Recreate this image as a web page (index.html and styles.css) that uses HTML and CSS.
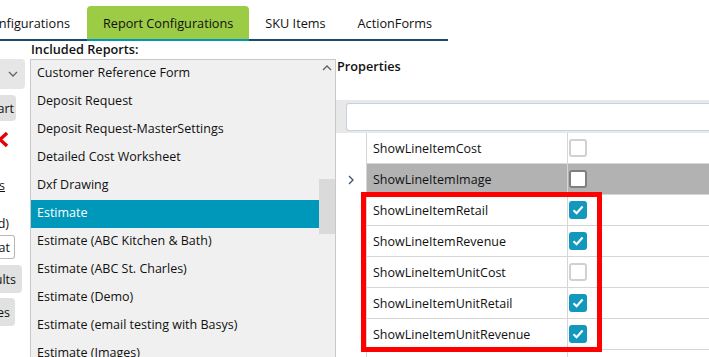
FILE: index.html
```html
<!DOCTYPE html>
<html lang="en">
<head>
    <meta charset="UTF-8">
    <meta name="viewport" content="width=device-width, initial-scale=1.0">
    <title>Report Configurations</title>
    <link rel="stylesheet" href="styles.css">
</head>
<body>
    <nav class="tabs">
        <div class="tab tab-cut"><span>Configurations</span></div>
        <div class="tab active">Report Configurations</div>
        <div class="tab">SKU Items</div>
        <div class="tab">ActionForms</div>
    </nav>

    <div class="workspace">
        <aside class="side">
            <div class="side-item dropdown">
                <svg width="10" height="6" viewBox="0 0 10 6"><path d="M1 1 L5 5 L9 1" fill="none" stroke="#5a6470" stroke-width="1.3"/></svg>
            </div>
            <div class="side-item side-btn btn-start"><span>Start</span></div>
            <div class="side-item remove">
                <svg width="8" height="15" viewBox="0 0 8 15"><path d="M-7 1 L7 14 M-7 14 L7 1" fill="none" stroke="#e8000b" stroke-width="3.4"/></svg>
            </div>
            <div class="side-item side-text link"><span>Options</span></div>
            <div class="side-item side-text required"><span>(Required)</span></div>
            <div class="side-item side-input"><span>Format</span></div>
            <div class="side-item side-btn btn-defaults"><span>Defaults</span></div>
            <div class="side-item side-btn btn-save"><span>Save Changes</span></div>
        </aside>

        <section class="reports">
            <div class="reports-label">Included Reports:</div>
            <div class="listbox">
                <ul class="report-list">
                    <li>Customer Reference Form</li>
                    <li>Deposit Request</li>
                    <li>Deposit Request-MasterSettings</li>
                    <li>Detailed Cost Worksheet</li>
                    <li>Dxf Drawing</li>
                    <li class="selected">Estimate</li>
                    <li>Estimate (ABC Kitchen &amp; Bath)</li>
                    <li>Estimate (ABC St. Charles)</li>
                    <li>Estimate (Demo)</li>
                    <li>Estimate (email testing with Basys)</li>
                    <li>Estimate (Images)</li>
                </ul>
                <div class="scrollbar">
                    <div class="scroll-arrow">
                        <svg width="10" height="6" viewBox="0 0 10 6"><path d="M1 5 L5 1 L9 5" fill="none" stroke="#606060" stroke-width="1.3"/></svg>
                    </div>
                    <div class="scroll-thumb"></div>
                </div>
            </div>
        </section>

        <section class="props">
            <div class="props-title">Properties</div>
            <div class="search-band"><div class="search-box"></div></div>
            <div class="grid">
                <div class="row">
                    <div class="cell-head"></div>
                    <div class="cell-name">ShowLineItemCost</div>
                    <div class="cell-value"><span class="check"></span></div>
                </div>
                <div class="row selected">
                    <div class="cell-head">
                        <svg width="6" height="10" viewBox="0 0 6 10"><path d="M1 1 L5 5 L1 9" fill="none" stroke="#3d5266" stroke-width="1.3"/></svg>
                    </div>
                    <div class="cell-name">ShowLineItemImage</div>
                    <div class="cell-value"><span class="check"></span></div>
                </div>
                <div class="row">
                    <div class="cell-head"></div>
                    <div class="cell-name">ShowLineItemRetail</div>
                    <div class="cell-value"><span class="check on"><svg width="14" height="14" viewBox="0 0 14 14"><path d="M2.5 7.2 L5.6 10.2 L11.6 3.6" fill="none" stroke="#fff" stroke-width="2.2"/></svg></span></div>
                </div>
                <div class="row">
                    <div class="cell-head"></div>
                    <div class="cell-name">ShowLineItemRevenue</div>
                    <div class="cell-value"><span class="check on"><svg width="14" height="14" viewBox="0 0 14 14"><path d="M2.5 7.2 L5.6 10.2 L11.6 3.6" fill="none" stroke="#fff" stroke-width="2.2"/></svg></span></div>
                </div>
                <div class="row">
                    <div class="cell-head"></div>
                    <div class="cell-name">ShowLineItemUnitCost</div>
                    <div class="cell-value"><span class="check"></span></div>
                </div>
                <div class="row">
                    <div class="cell-head"></div>
                    <div class="cell-name">ShowLineItemUnitRetail</div>
                    <div class="cell-value"><span class="check on"><svg width="14" height="14" viewBox="0 0 14 14"><path d="M2.5 7.2 L5.6 10.2 L11.6 3.6" fill="none" stroke="#fff" stroke-width="2.2"/></svg></span></div>
                </div>
                <div class="row">
                    <div class="cell-head"></div>
                    <div class="cell-name">ShowLineItemUnitRevenue</div>
                    <div class="cell-value"><span class="check on"><svg width="14" height="14" viewBox="0 0 14 14"><path d="M2.5 7.2 L5.6 10.2 L11.6 3.6" fill="none" stroke="#fff" stroke-width="2.2"/></svg></span></div>
                </div>
                <div class="row">
                    <div class="cell-head"></div>
                    <div class="cell-name"></div>
                    <div class="cell-value"></div>
                </div>
            </div>
            <div class="highlight"></div>
        </section>
    </div>
</body>
</html>
```

FILE: styles.css
```css
:root {
    --text: #111;
    --border: #c9c9c9;
    --grid-line: #d6d6d6;
    --list-bg: #f0f0f0;
    --teal: #0098ba;
    --check: #1297bd;
    --green: #9ccb45;
    --navy: #1b4a6e;
}
body {
    margin: 0;
    font-family: "Open Sans", "Noto Sans", sans-serif;
    font-size: 12.5px;
    color: var(--text);
    background: #fff;
    overflow: hidden;
    height: 357px;
}

/* tabs */
.tabs { display: flex; width: max-content; padding-top: 6px; border-bottom: 2px solid var(--navy); }
.tab { flex: none; height: 33px; padding: 0 16px; display: flex; align-items: center; white-space: nowrap; font-size: 12.7px; }
.tab-cut { width: 87px; box-sizing: border-box; padding: 0 17px 0 0; justify-content: flex-end; overflow: hidden; }
.tab.active { background: var(--green); border-radius: 4px 4px 0 0; border-bottom: 2px solid var(--teal); margin-bottom: -2px; }

/* layout */
.workspace { display: flex; align-items: flex-start; height: 316px; }

/* clipped left column */
.side { width: 26px; flex: none; margin-right: 4px; padding-top: 18px; display: flex; flex-direction: column; overflow: hidden; }
.side-item { flex: none; display: flex; justify-content: flex-end; align-items: center; white-space: nowrap; overflow: hidden; box-sizing: border-box; }
.dropdown { width: 25px; height: 30px; background: #e6e6e6; border-radius: 0 4px 4px 0; justify-content: center; padding-left: 1px; }
.side-btn { background: #e1e1e1; border-radius: 0 4px 4px 0; }
.btn-start { width: 16px; height: 26px; margin-top: 6px; padding-right: 2px; }
.remove { width: 8px; height: 15px; margin-top: 11px; justify-content: flex-start; }
.side-text { width: 26px; height: 17px; line-height: 17px; }
.link { margin-top: 30px; padding-right: 21px; }
.link span { text-decoration: underline; }
.required { margin-top: 21px; padding-right: 17px; }
.side-input { width: 15px; height: 24px; margin-top: 3px; background: #fff; border: 1px solid #b8b8b8; border-left: none; border-radius: 0 3px 3px 0; padding-right: 4px; }
.btn-defaults { width: 22px; height: 28px; margin-top: 6px; padding-right: 6px; }
.btn-save { width: 15px; height: 28px; margin-top: 5px; padding-right: 5px; }

/* reports list */
.reports { width: 306px; flex: none; }
.reports-label { line-height: 17px; font-size: 12.7px; font-weight: 600; padding-left: 1px; }
.listbox { margin-top: 1px; height: 320px; display: flex; background: var(--list-bg); border: 1px solid var(--border); border-bottom: none; }
.report-list { list-style: none; margin: 0; padding: 0; flex: 1; }
.report-list li { height: 28px; line-height: 25px; padding: 0 0 3px 6px; box-sizing: border-box; white-space: nowrap; }
.report-list li.selected { background: var(--teal); color: #fff; }
.scrollbar { width: 16px; flex: none; display: flex; flex-direction: column; align-items: center; }
.scroll-arrow { height: 16px; display: flex; align-items: center; justify-content: center; }
.scroll-thumb { width: 16px; height: 55px; margin-top: 103px; background: #dadada; }

/* properties */
.props { flex: 1; position: relative; overflow: hidden; padding-top: 17px; height: 299px; }
.props-title { line-height: 17px; font-size: 12.7px; font-weight: 600; padding-left: 1px; }
.search-band { margin-top: 25px; background: #e8e8e8; padding: 3px 0 2px 10px; }
.search-box { height: 28px; box-sizing: border-box; background: #fff; border: 1px solid #c5d3e0; border-right: none; border-radius: 3px 0 0 3px; }
.row { display: grid; grid-template-columns: 30px 201px 1fr; height: 31px; }
.cell-head { display: flex; align-items: center; justify-content: center; }
.cell-name, .cell-value { display: flex; align-items: center; border-left: 1px solid var(--grid-line); border-bottom: 1px solid var(--grid-line); white-space: nowrap; }
.cell-name { padding-left: 6px; }
.cell-value { padding-left: 1px; }
.row.selected .cell-name, .row.selected .cell-value { background: #b2b2b2; }
.check { width: 18px; height: 18px; box-sizing: border-box; border: 2px solid #d0d0d0; border-radius: 3px; background: #fff; display: flex; }
.check.on { background: var(--check); border-color: var(--check); }
.row.selected .check { border-color: #7f7f7f; }
.highlight { position: absolute; left: 25px; top: 151px; width: 241px; height: 160px; border: 5px solid #ff0000; box-sizing: border-box; }
```
